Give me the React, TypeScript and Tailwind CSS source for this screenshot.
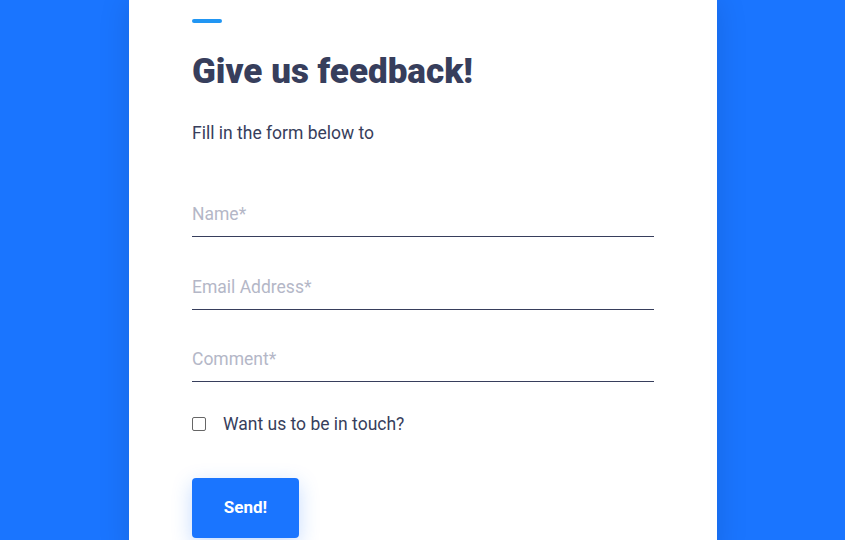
import React from "react";

export default function App() {
  const fields = ["Name*", "Email Address*", "Comment*"];
  return (
    <div
      className="w-[845px] h-[540px] overflow-hidden bg-[#1a75ff] flex justify-start"
      style={{ fontFamily: "Roboto, 'Noto Sans', sans-serif" }}
    >
      <div className="ml-[129px] w-[588px] h-[560px] bg-white shadow-[0_0_30px_rgba(0,0,0,0.12)] px-[63px] pt-[19px] flex flex-col">
        <div className="w-[30px] h-[4px] rounded-full bg-[#2196f3]" />
        <h1 className="mt-[27px] text-[35px] leading-[44px] font-black text-[#373e5c]">
          Give us feedback!
        </h1>
        <p className="mt-[27px] text-[17.5px] leading-[24px] text-[#373e5c]">
          Fill in the form below to
        </p>
        <div className="mt-[44px] flex flex-col">
          {fields.map((p, i) => (
            <input
              key={p}
              placeholder={p}
              className={
                (i === 1 ? "mt-[25px] " : i === 2 ? "mt-[24px] " : "") +
                "w-full h-[48px] border-b border-[#373e5c] pt-[14px] pb-[11px] text-[17.5px] leading-[22px] text-[#373e5c] placeholder:text-[#b4b7c7] outline-none bg-transparent"
              }
            />
          ))}
        </div>
        <label className="mt-[30px] flex items-center gap-[17px] text-[17.5px] text-[#373e5c]">
          <span className="w-[14px] h-[14px] border border-[#666] rounded-[2px] bg-white" />
          <span className="leading-[24px]">Want us to be in touch?</span>
        </label>
        <button className="mt-[42px] w-[107px] h-[60px] rounded-[4px] bg-[#1a75ff] text-white font-bold text-[17px] shadow-[0_6px_20px_rgba(26,117,255,0.25)]">
          Send!
        </button>
      </div>
    </div>
  );
}
